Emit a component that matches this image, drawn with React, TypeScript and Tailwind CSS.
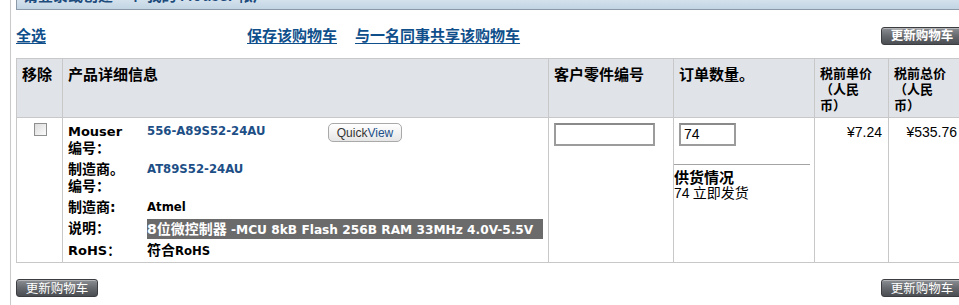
const cjk = '"Noto Sans CJK SC", sans-serif';
const arial = '"Liberation Sans", Arial, sans-serif';

function UpdateButton() {
  return (
    <button
      type="button"
      className="flex h-[18px] w-[82px] items-center justify-center rounded-[3px] border border-[#3b3d40] bg-gradient-to-b from-[#8c8f93] via-[#66696d] to-[#4a4d51] text-[12.5px] leading-none text-white shadow-[inset_0_1px_0_rgba(255,255,255,0.35)]"
      style={{ fontFamily: cjk }}
    >
      更新购物车
    </button>
  );
}

// CJK runs inside the Verdana-like bold text sit a little larger
function Zh({ children }: { children: React.ReactNode }) {
  return <span className="text-[14px]">{children}</span>;
}

function DetailRow({
  label,
  children,
  span,
}: {
  label: React.ReactNode;
  children?: React.ReactNode;
  span?: boolean;
}) {
  return (
    <>
      <div className="py-[2px] text-[13px] font-bold leading-[17px] text-black">{label}</div>
      <div className={`py-[2px] text-[11.7px] font-bold leading-[17px] ${span ? 'col-span-2' : ''}`}>
        {children}
      </div>
    </>
  );
}

export default function App() {
  const headCell =
    'border border-[#c8c8c8] px-[5px] pt-[6px] text-left align-top font-bold text-black [text-spacing-trim:space-all]';

  return (
    <div
      className="h-[305px] w-[959px] overflow-hidden bg-white pl-[10px]"
      style={{ fontFamily: '"DejaVu Sans", "Noto Sans CJK SC", sans-serif' }}
    >
      <div className="h-full w-[954px] border-l border-[#cacaca] pl-[5px]">
        {/* cut-off title bar */}
        <div className="h-[10px] w-[960px] overflow-hidden border-b border-l border-[#8c9aa8] bg-gradient-to-b from-[#d3e1ec] to-[#c2d4e3]">
          <div
            className="-mt-[14px] pl-[6px] text-[15px] font-bold leading-[17px] text-[#1d4b7c]"
            style={{ fontFamily: cjk }}
          >
            请登录或创建一个 我的 Mouser 帐户
          </div>
        </div>

        <div className="w-[947px]">
          {/* action links */}
          <div
            className="mt-[17px] flex h-[17px] items-center text-[15px] font-bold text-[#0f4f8b]"
            style={{ fontFamily: cjk }}
          >
            <a className="underline underline-offset-2">全选</a>
            <a className="ml-[201px] underline underline-offset-2">保存该购物车</a>
            <a className="ml-[18px] underline underline-offset-2">与一名同事共享该购物车</a>
            <div className="ml-auto">
              <UpdateButton />
            </div>
          </div>

          {/* cart table */}
          <table className="mt-[14px] w-[947px] table-fixed border-collapse">
            <colgroup>
              <col className="w-[46px]" />
              <col className="w-[486px]" />
              <col className="w-[125px]" />
              <col className="w-[141px]" />
              <col className="w-[74px]" />
              <col className="w-[75px]" />
            </colgroup>
            <thead>
              <tr className="h-[59px] bg-[#e0e3e8]" style={{ fontFamily: cjk }}>
                <th className={`${headCell} text-[15px] leading-[18px]`}>移除</th>
                <th className={`${headCell} text-[15px] leading-[18px]`}>产品详细信息</th>
                <th className={`${headCell} text-[15px] leading-[18px]`}>客户零件编号</th>
                <th className={`${headCell} text-[15px] leading-[18px]`}>订单数量。</th>
                <th className={`${headCell} text-[13px] leading-[16px]`}>
                  税前单价
                  <br />
                  （人民
                  <br />
                  币）
                </th>
                <th className={`${headCell} text-[13px] leading-[16px]`}>
                  税前总价
                  <br />
                  （人民
                  <br />
                  币）
                </th>
              </tr>
            </thead>
            <tbody>
              <tr className="h-[144px]">
                <td className="border border-[#c8c8c8] pt-[5px] align-top">
                  <div className="ml-[17px] h-[13px] w-[13px] border border-[#8e8f8f] bg-gradient-to-br from-[#dcdcdc] to-[#fbfbfb]" />
                </td>

                <td className="border border-[#c8c8c8] px-[5px] pt-[3px] align-top">
                  <div className="grid grid-cols-[79px_181px_auto]">
                    <DetailRow
                      label={
                        <>
                          Mouser
                          <br />
                          <Zh>编号：</Zh>
                        </>
                      }
                    >
                      <a className="text-[#1d4f86]">556-A89S52-24AU</a>
                    </DetailRow>
                    <div className="pt-[2px]">
                      <button
                        type="button"
                        className="flex h-[19px] w-[74px] items-center justify-center rounded-[5px] border border-[#a9a9a9] bg-gradient-to-b from-[#ffffff] to-[#e6e6e6] text-[12px] leading-none"
                        style={{ fontFamily: arial }}
                      >
                        <span className="text-[#333333]">Quick</span>
                        <span className="text-[#1a4f8a]">View</span>
                      </button>
                    </div>

                    <DetailRow
                      span
                      label={
                        <Zh>
                          制造商。
                          <br />
                          编号：
                        </Zh>
                      }
                    >
                      <a className="text-[#1d4f86]">AT89S52-24AU</a>
                    </DetailRow>

                    <DetailRow span label={<Zh>制造商:</Zh>}>
                      <span className="text-black">Atmel</span>
                    </DetailRow>

                    <DetailRow span label={<Zh>说明：</Zh>}>
                      <div className="-my-[1px] h-[20px] w-[396px] bg-[#6b6b6b] text-[12.2px] leading-[20px] text-white">
                        <Zh>8位微控制器</Zh> -MCU 8kB Flash 256B RAM 33MHz 4.0V-5.5V
                      </div>
                    </DetailRow>

                    <DetailRow span label="RoHS：">
                      <span className="text-black">
                        <Zh>符合</Zh>RoHS
                      </span>
                    </DetailRow>
                  </div>
                </td>

                <td className="border border-[#c8c8c8] px-[5px] pt-[5px] align-top">
                  <div className="h-[23px] w-[101px] border-2 border-[#9c9c9c] border-t-[#8a8a8a] bg-white" />
                </td>

                <td className="border border-[#c8c8c8] pt-[5px] align-top">
                  <div
                    className="ml-[5px] flex h-[23px] w-[57px] items-center border-2 border-[#9c9c9c] border-t-[#8a8a8a] bg-white pl-[3px] text-[14px] text-black"
                    style={{ fontFamily: arial }}
                  >
                    74
                  </div>
                  <div className="mr-[4px] mt-[18px] border-t border-[#a3a3a3]" />
                  <div className="mt-[3px] text-black" style={{ fontFamily: cjk }}>
                    <div className="text-[15px] font-bold leading-[17px]">供货情况</div>
                    <div className="text-[14px] leading-[15px]">
                      <span style={{ fontFamily: arial }}>74</span> 立即发货
                    </div>
                  </div>
                </td>

                <td
                  className="border border-[#c8c8c8] pr-[6px] pt-[6px] text-right align-top text-[14px] leading-[16px] text-black"
                  style={{ fontFamily: arial }}
                >
                  ¥7.24
                </td>
                <td
                  className="border border-[#c8c8c8] pr-[6px] pt-[6px] text-right align-top text-[14px] leading-[16px] text-black"
                  style={{ fontFamily: arial }}
                >
                  ¥535.76
                </td>
              </tr>
            </tbody>
          </table>

          {/* bottom buttons */}
          <div className="mt-[16px] flex items-center justify-between">
            <UpdateButton />
            <UpdateButton />
          </div>
        </div>
      </div>
    </div>
  );
}
